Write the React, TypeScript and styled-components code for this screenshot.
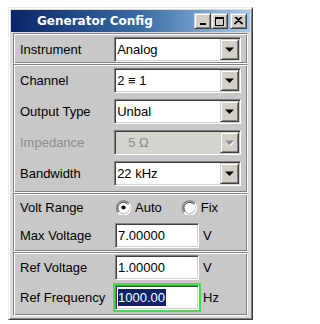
import React from 'react';
import styled, { createGlobalStyle, css } from 'styled-components';

const GlobalStyle = createGlobalStyle`
  body {
    margin: 0;
    background: #ffffff;
    font-family: "Liberation Sans", Arial, sans-serif;
  }
`;

const Page = styled.div`
  padding: 7px 0 0 8px;
`;

const Window = styled.div`
  width: 245px;
  box-sizing: border-box;
  background: #dcdcdc;
  border: 1px solid;
  border-color: #ececec #404040 #404040 #ececec;
  box-shadow: inset 1px 1px #ffffff, inset -1px -1px #808080;
  padding: 2px;
`;

const TitleBar = styled.div`
  height: 22px;
  display: flex;
  align-items: center;
  padding-left: 26px;
  padding-right: 3px;
  background: linear-gradient(to right, #0a246a 0%, #3a6ea5 55%, #a6caf0 100%);
`;

const Title = styled.span`
  flex: 1;
  color: #ffffff;
  font-family: "DejaVu Sans", Tahoma, sans-serif;
  font-weight: bold;
  font-size: 12px;
`;

const CaptionButton = styled.div<{ $gap?: number }>`
  width: 17px;
  height: 16px;
  box-sizing: border-box;
  margin-left: ${({ $gap }) => $gap ?? 0}px;
  background: #d4d0c8;
  border: 1px solid;
  border-color: #d4d0c8 #404040 #404040 #d4d0c8;
  box-shadow: inset 1px 1px #ffffff, inset -1px -1px #808080;
  display: flex;
  align-items: center;
  justify-content: center;
`;

const Body = styled.div`
  padding: 1px 2px 1px 2px;
`;

const Group = styled.div<{ $pt: number; $pb: number; $gap: number }>`
  background: #c8c8c8;
  border: 1px solid;
  border-color: #808080 #ffffff #ffffff #808080;
  box-shadow: inset 1px 1px #ffffff, inset -1px -1px #808080;
  padding: ${({ $pt }) => $pt}px 6px ${({ $pb }) => $pb}px 6px;
  display: flex;
  flex-direction: column;
  gap: ${({ $gap }) => $gap}px;
`;

const Row = styled.div<{ $h?: number }>`
  display: flex;
  align-items: center;
  height: ${({ $h }) => $h ?? 25}px;
`;

const Label = styled.span<{ $disabled?: boolean }>`
  width: 95px;
  font-size: 13px;
  color: ${({ $disabled }) => ($disabled ? '#8c8c8c' : '#000000')};
  white-space: nowrap;
`;

const sunken = css`
  box-sizing: border-box;
  border: 1px solid;
  border-color: #808080 #ffffff #ffffff #808080;
  box-shadow: inset 1px 1px #404040, inset -1px -1px #d4d0c8;
`;

const ComboBox = styled.div<{ $disabled?: boolean }>`
  ${sunken};
  width: 128px;
  height: 25px;
  padding: 1px;
  display: flex;
  background: ${({ $disabled }) => ($disabled ? '#d6d4cf' : '#ffffff')};
`;

const ComboText = styled.span<{ $disabled?: boolean; $indent?: number }>`
  flex: 1;
  display: flex;
  align-items: center;
  padding-left: ${({ $indent }) => 1 + ($indent ?? 0)}px;
  font-size: 13px;
  color: ${({ $disabled }) => ($disabled ? '#8c8c8c' : '#000000')};
`;

const DropButton = styled.div`
  width: 19px;
  box-sizing: border-box;
  background: #d4d0c8;
  border: 1px solid;
  border-color: #d4d0c8 #404040 #404040 #d4d0c8;
  box-shadow: inset 1px 1px #ffffff, inset -1px -1px #808080;
  display: flex;
  align-items: center;
  justify-content: center;
`;

const TextField = styled.div<{ $focused?: boolean }>`
  ${sunken};
  width: 84px;
  height: 25px;
  padding: 1px 2px;
  display: flex;
  align-items: center;
  background: #ffffff;
  font-size: 13px;
  color: #000000;
  outline: ${({ $focused }) => ($focused ? '2px solid #3fe33f' : 'none')};
`;

const Selected = styled.span`
  background: #0a246a;
  color: #ffffff;
  padding: 1px 1px 1px 0;
`;

const Unit = styled.span`
  margin-left: 4px;
  font-size: 13px;
  color: #000000;
`;

const RadioSet = styled.div`
  display: flex;
  align-items: center;
  margin-left: 1px;
  gap: 20px;
`;

const RadioItem = styled.label`
  display: flex;
  align-items: center;
  gap: 4px;
  font-size: 13px;
  color: #000000;
`;

const Arrow: React.FC<{ disabled?: boolean }> = ({ disabled }) => (
  <svg width="9" height="6" viewBox="0 0 9 6">
    {disabled && <polygon points="1,1 10,1 5.5,6" fill="#ffffff" />}
    <polygon points="0,0.5 9,0.5 4.5,5" fill={disabled ? '#8c8c8c' : '#000000'} />
  </svg>
);

const RadioMark: React.FC<{ checked?: boolean }> = ({ checked }) => (
  <svg width="15" height="15" viewBox="0 0 15 15">
    <path d="M13 3.5 A7 7 0 0 0 2 12.5" stroke="#808080" strokeWidth="1.2" fill="none" />
    <path d="M2 12.5 A7 7 0 0 0 13 3.5" stroke="#ffffff" strokeWidth="1.2" fill="none" />
    <circle cx="7.5" cy="7.5" r="5.6" fill="#ffffff" />
    <path d="M11.6 4.2 A5.4 5.4 0 0 0 3.3 11.6" stroke="#404040" strokeWidth="1" fill="none" />
    {checked && <circle cx="7.5" cy="7.5" r="2.1" fill="#000000" />}
  </svg>
);

const Combo: React.FC<{ value: string; disabled?: boolean; indent?: number }> = ({
  value,
  disabled,
  indent,
}) => (
  <ComboBox $disabled={disabled}>
    <ComboText $disabled={disabled} $indent={indent}>
      {value}
    </ComboText>
    <DropButton>
      <Arrow disabled={disabled} />
    </DropButton>
  </ComboBox>
);

const App: React.FC = () => (
  <Page>
    <GlobalStyle />
    <Window>
      <TitleBar>
        <Title>Generator Config</Title>
        <CaptionButton>
          <svg width="8" height="9" viewBox="0 0 8 9">
            <rect x="1" y="6" width="6" height="2" fill="#000" />
          </svg>
        </CaptionButton>
        <CaptionButton>
          <svg width="9" height="9" viewBox="0 0 9 9">
            <rect x="0.5" y="0.5" width="8" height="8" fill="none" stroke="#000" />
            <rect x="0" y="0" width="9" height="2" fill="#000" />
          </svg>
        </CaptionButton>
        <CaptionButton $gap={2}>
          <svg width="9" height="8" viewBox="0 0 9 8">
            <path d="M1 0 L8 7 M8 0 L1 7 M2 0 L9 7 M7 0 L0 7" stroke="#000" strokeWidth="1.1" />
          </svg>
        </CaptionButton>
      </TitleBar>
      <Body>
        <Group $pt={3} $pb={1} $gap={0}>
          <Row>
            <Label>Instrument</Label>
            <Combo value="Analog" />
          </Row>
        </Group>
        <Group $pt={3} $pb={6} $gap={6}>
          <Row>
            <Label>Channel</Label>
            <Combo value="2 ≡ 1" />
          </Row>
          <Row>
            <Label>Output Type</Label>
            <Combo value="Unbal" />
          </Row>
          <Row>
            <Label $disabled>Impedance</Label>
            <Combo value="5 Ω" disabled indent={11} />
          </Row>
          <Row>
            <Label>Bandwidth</Label>
            <Combo value="22 kHz" />
          </Row>
        </Group>
        <Group $pt={3} $pb={3} $gap={5}>
          <Row $h={21}>
            <Label>Volt Range</Label>
            <RadioSet>
              <RadioItem>
                <RadioMark checked />
                Auto
              </RadioItem>
              <RadioItem>
                <RadioMark />
                Fix
              </RadioItem>
            </RadioSet>
          </Row>
          <Row>
            <Label>Max Voltage</Label>
            <TextField>7.00000</TextField>
            <Unit>V</Unit>
          </Row>
        </Group>
        <Group $pt={2} $pb={5} $gap={5}>
          <Row>
            <Label>Ref Voltage</Label>
            <TextField>1.00000</TextField>
            <Unit>V</Unit>
          </Row>
          <Row>
            <Label>Ref Frequency</Label>
            <TextField $focused>
              <Selected>1000.00</Selected>
            </TextField>
            <Unit>Hz</Unit>
          </Row>
        </Group>
      </Body>
    </Window>
  </Page>
);

export default App;
